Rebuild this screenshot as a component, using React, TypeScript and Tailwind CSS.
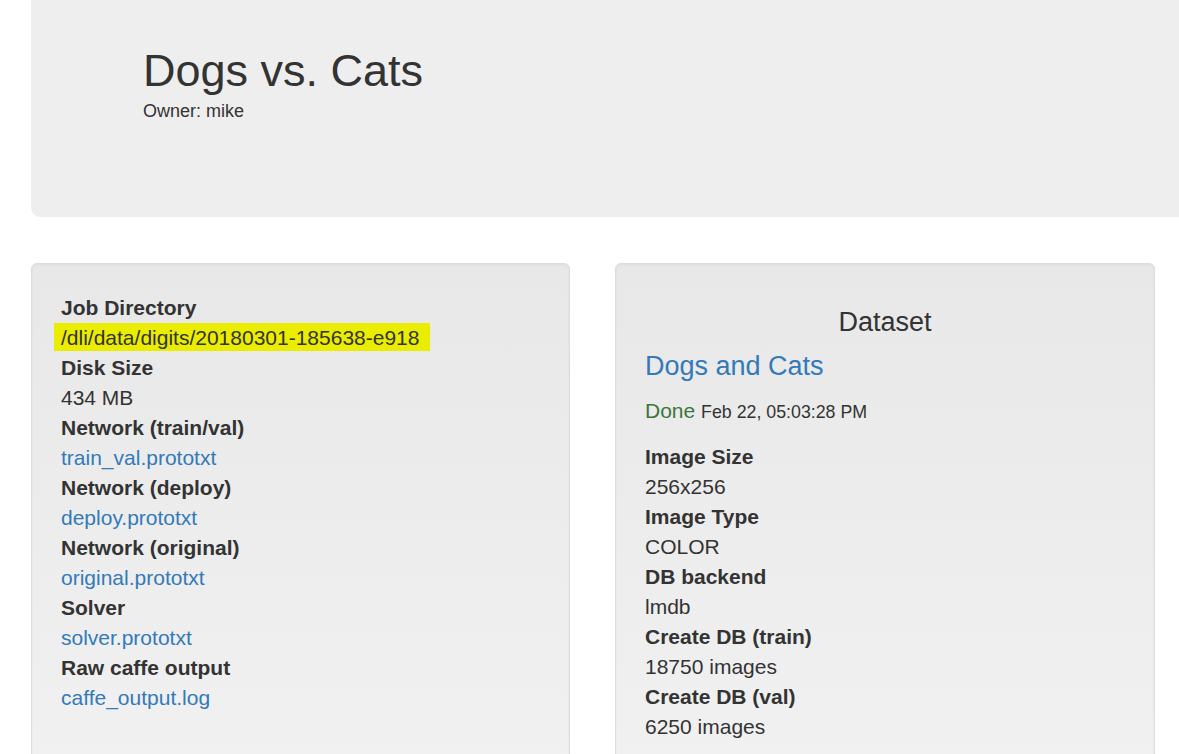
import React from 'react';

type Item = { label: string; value: string; link?: boolean; marked?: boolean };

const jobInfo: Item[] = [
  { label: 'Job Directory', value: '/dli/data/digits/20180301-185638-e918', marked: true },
  { label: 'Disk Size', value: '434 MB' },
  { label: 'Network (train/val)', value: 'train_val.prototxt', link: true },
  { label: 'Network (deploy)', value: 'deploy.prototxt', link: true },
  { label: 'Network (original)', value: 'original.prototxt', link: true },
  { label: 'Solver', value: 'solver.prototxt', link: true },
  { label: 'Raw caffe output', value: 'caffe_output.log', link: true },
];

const datasetInfo: Item[] = [
  { label: 'Image Size', value: '256x256' },
  { label: 'Image Type', value: 'COLOR' },
  { label: 'DB backend', value: 'lmdb' },
  { label: 'Create DB (train)', value: '18750 images' },
  { label: 'Create DB (val)', value: '6250 images' },
];

const InfoList: React.FC<{ items: Item[] }> = ({ items }) => (
  <dl className="text-[21px] leading-[30px]">
    {items.map((item) => (
      <React.Fragment key={item.label}>
        <dt className="font-bold">{item.label}</dt>
        <dd>
          {item.marked ? (
            <span className="block w-fit -ml-[7px] pl-[7px] pr-[11px] h-[28px] mb-[2px] leading-[29px] bg-[#ebed00]">
              {item.value}
            </span>
          ) : item.link ? (
            <a href="#" className="text-[#337ab7]">
              {item.value}
            </a>
          ) : (
            item.value
          )}
        </dd>
      </React.Fragment>
    ))}
  </dl>
);

const Well: React.FC<{ children: React.ReactNode }> = ({ children }) => (
  <div className="h-[740px] rounded-[6px] border border-[#dcdcdc] bg-[linear-gradient(to_bottom,#e8e8e8,#f5f5f5)] shadow-[inset_0_1px_3px_rgba(0,0,0,0.05)] px-[29px] pt-[29px]">
    {children}
  </div>
);

export default function App() {
  return (
    <div className="min-h-screen overflow-hidden bg-white text-[#333333] font-['Liberation_Sans',Arial,sans-serif]">
      <div className="ml-[31px] -mr-[40px] h-[217px] rounded-bl-[9px] bg-[#eeeeee] pl-[112px] pt-[46px]">
        <h2 className="text-[45px] leading-[49px]">Dogs vs. Cats</h2>
        <div className="mt-[6px] text-[18px] leading-[20px]">Owner: mike</div>
      </div>

      <div className="mt-[46px] ml-[31px] grid grid-cols-[539px_540px] gap-x-[45px]">
        <Well>
          <InfoList items={jobInfo} />
        </Well>
        <Well>
          <h4 className="mt-[14px] text-center text-[27px] leading-[30px]">Dataset</h4>
          <h4 className="mt-[14px] text-[27px] leading-[30px]">
            <a href="#" className="text-[#337ab7]">Dogs and Cats</a>
          </h4>
          <p className="mt-[15px] text-[21px] leading-[30px]">
            <span className="text-[#3c763d]">Done</span>{' '}
            <small className="text-[17.8px]">Feb 22, 05:03:28 PM</small>
          </p>
          <div className="mt-[15px]">
            <InfoList items={datasetInfo} />
          </div>
        </Well>
      </div>
    </div>
  );
}
